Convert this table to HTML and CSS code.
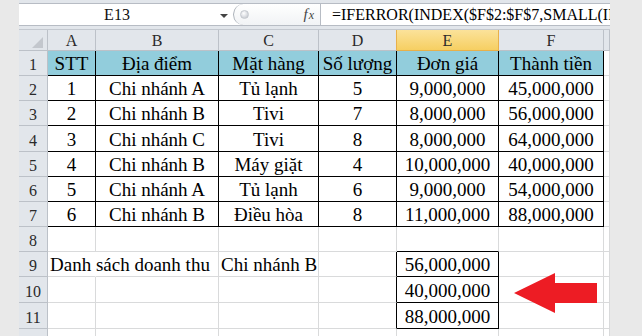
FILE: index.html
```html
<!DOCTYPE html>
<html lang="vi">
<head>
<meta charset="utf-8">
<title>Excel</title>
<link rel="stylesheet" href="styles.css">
</head>
<body>
<div class="app">
  <div class="side"></div>
  <div class="main">
    <div class="fbar">
      <div class="fbar-box">
        <div class="namebox"><span class="name">E13</span><span class="dd"></span></div>
        <div class="pill"><span class="knob"></span><span class="fx"><i>f</i><i class="x">x</i></span></div>
        <div class="formula">=IFERROR(INDEX($F$2:$F$7,SMALL(IF($B$2:$B$7=$C$9,ROW($B$2:$B$7)-1),ROW(A1))),"")</div>
      </div>
    </div>
    <div class="sheet">
      <div class="h corner"><span class="tri"></span></div>
      <div class="h ch">A</div><div class="h ch">B</div><div class="h ch">C</div><div class="h ch dsel">D</div><div class="h ch sel">E</div><div class="h ch">F</div><div class="h ch"></div>

      <div class="h rh">1</div>
      <div class="c b th">STT</div><div class="c b th">Địa điểm</div><div class="c b th">Mặt hàng</div><div class="c b th">Số lượng</div><div class="c b th">Đơn giá</div><div class="c b th">Thành tiền</div><div class="c"></div>

      <div class="h rh">2</div>
      <div class="c b">1</div><div class="c b">Chi nhánh A</div><div class="c b">Tủ lạnh</div><div class="c b">5</div><div class="c b">9,000,000</div><div class="c b">45,000,000</div><div class="c"></div>

      <div class="h rh">3</div>
      <div class="c b">2</div><div class="c b">Chi nhánh B</div><div class="c b">Tivi</div><div class="c b">7</div><div class="c b">8,000,000</div><div class="c b">56,000,000</div><div class="c"></div>

      <div class="h rh">4</div>
      <div class="c b">3</div><div class="c b">Chi nhánh C</div><div class="c b">Tivi</div><div class="c b">8</div><div class="c b">8,000,000</div><div class="c b">64,000,000</div><div class="c"></div>

      <div class="h rh">5</div>
      <div class="c b">4</div><div class="c b">Chi nhánh B</div><div class="c b">Máy giặt</div><div class="c b">4</div><div class="c b">10,000,000</div><div class="c b">40,000,000</div><div class="c"></div>

      <div class="h rh">6</div>
      <div class="c b">5</div><div class="c b">Chi nhánh A</div><div class="c b">Tủ lạnh</div><div class="c b">6</div><div class="c b">9,000,000</div><div class="c b">54,000,000</div><div class="c"></div>

      <div class="h rh">7</div>
      <div class="c b">6</div><div class="c b">Chi nhánh B</div><div class="c b">Điều hòa</div><div class="c b">8</div><div class="c b">11,000,000</div><div class="c b">88,000,000</div><div class="c"></div>

      <div class="h rh">8</div>
      <div class="c"></div><div class="c"></div><div class="c"></div><div class="c"></div><div class="c bb"></div><div class="c"></div><div class="c"></div>

      <div class="h rh">9</div>
      <div class="c l spill">Danh sách doanh thu</div><div class="c"></div><div class="c l">Chi nhánh B</div><div class="c br"></div><div class="c b">56,000,000</div><div class="c"></div><div class="c"></div>

      <div class="h rh">10</div>
      <div class="c"></div><div class="c"></div><div class="c"></div><div class="c br"></div><div class="c b">40,000,000</div><div class="c"></div><div class="c"></div>

      <div class="h rh">11</div>
      <div class="c"></div><div class="c"></div><div class="c"></div><div class="c br"></div><div class="c b">88,000,000</div><div class="c"></div><div class="c"></div>

      <div class="h rh">12</div>
      <div class="c"></div><div class="c"></div><div class="c"></div><div class="c"></div><div class="c"></div><div class="c"></div><div class="c"></div>
    </div>
  </div>
  <div class="side side-r"></div>
  <svg class="arrow" width="83" height="40" viewBox="0 0 83 40" aria-hidden="true">
    <polygon points="0,20 41,0 41,10 83,10 83,30 41,30 41,40" fill="#ed1c24"/>
  </svg>
</div>
</body>
</html>
```

FILE: styles.css
```css
* { box-sizing: border-box; }
html, body { margin: 0; padding: 0; overflow: hidden; }
body { font-family: "Liberation Serif", "Times New Roman", serif; background: #fff; color: #000; }

.app { position: relative; display: flex; width: 642px; height: 336px; overflow: hidden; }
.side { width: 19px; flex: none; background: #e9e9e9; }
.side-r { width: 32px; }
.main { width: 591px; flex: none; display: flex; flex-direction: column; }

/* formula bar */
.fbar { height: 30px; flex: none; background: #e2e6eb; padding: 3px 0 4px; border-bottom: 1px solid #c3c8cf; }
.fbar-box { height: 23px; background: #fff; border-top: 1px solid #b7bcc4; border-bottom: 1px solid #b7bcc4; display: flex; align-items: stretch; }
.namebox { width: 214px; flex: none; display: flex; align-items: center; }
.name { width: 196px; text-align: center; font-size: 16px; line-height: 20px; color: #111; }
.dd { width: 0; height: 0; margin-left: 5px; border-left: 4px solid transparent; border-right: 4px solid transparent; border-top: 4px solid #444; margin-top: 2px; }
.pill { width: 88px; flex: none; position: relative; display: flex; align-items: center; justify-content: flex-end; padding-right: 6px;
  border-left: 1px solid #aab0b8; border-right: 1px solid #b7bcc4; border-radius: 11px 0 0 11px;
  background: linear-gradient(#ffffff, #f1f3f5); }
.knob { position: absolute; left: 6px; top: 6px; width: 9px; height: 9px; border-radius: 50%;
  background: radial-gradient(circle at 40% 35%, #ffffff 0, #e4e6ea 40%, #b9bdc4 100%); border: 1px solid #c5c9cf; }
.fx { font-size: 15px; line-height: 20px; color: #444; }
.fx i { font-style: italic; }
.fx .x { font-size: 12px; margin-left: 1px; }
.formula { flex: 1; min-width: 0; overflow: hidden; white-space: nowrap; padding-left: 11px; font-size: 16px; line-height: 20px; display: flex; align-items: center; }

/* sheet */
.sheet { display: grid; grid-template-columns: 29px 48px 123px 100px 78px 102px 105px 6px;
  grid-template-rows: 21px 25px 25px 25px 26px 25px 25px 25px 25px 25px 26px 26px 25px; }
.h { background: #e2e6eb; border-right: 1px solid #bcc1c8; border-bottom: 1px solid #bcc1c8; color: #2a2a2a; font-size: 16px;
  display: flex; justify-content: center; }
.ch { align-items: center; line-height: 20px; padding-top: 1px; }
.rh { align-items: flex-end; line-height: 20px; }
.corner { align-items: flex-end; justify-content: flex-end; padding: 0 4px 2px 0; }
.tri { width: 0; height: 0; border-left: 11px solid transparent; border-bottom: 11px solid #c3c7cd; }
.dsel { border-right-color: #e8b04a; }
.sel { background: linear-gradient(#fbe29a, #f6cf62); border-right-color: #e8b04a; border-bottom-color: #e8b04a; }

.c { border-right: 1px solid #d9dadb; border-bottom: 1px solid #d9dadb; font-size: 19px; line-height: 22px;
  display: flex; align-items: flex-end; justify-content: center; white-space: nowrap; }
.c.l { justify-content: flex-start; padding-left: 2px; }
.c.spill { border-right-color: #fff; position: relative; z-index: 1; overflow: visible; }
.c.b { border-right-color: #000; border-bottom-color: #000; }
.c.br { border-right-color: #000; }
.c.bb { border-bottom-color: #000; }
.c.th { background: #92cddc; }

.arrow { position: absolute; left: 514px; top: 273px; }
```
